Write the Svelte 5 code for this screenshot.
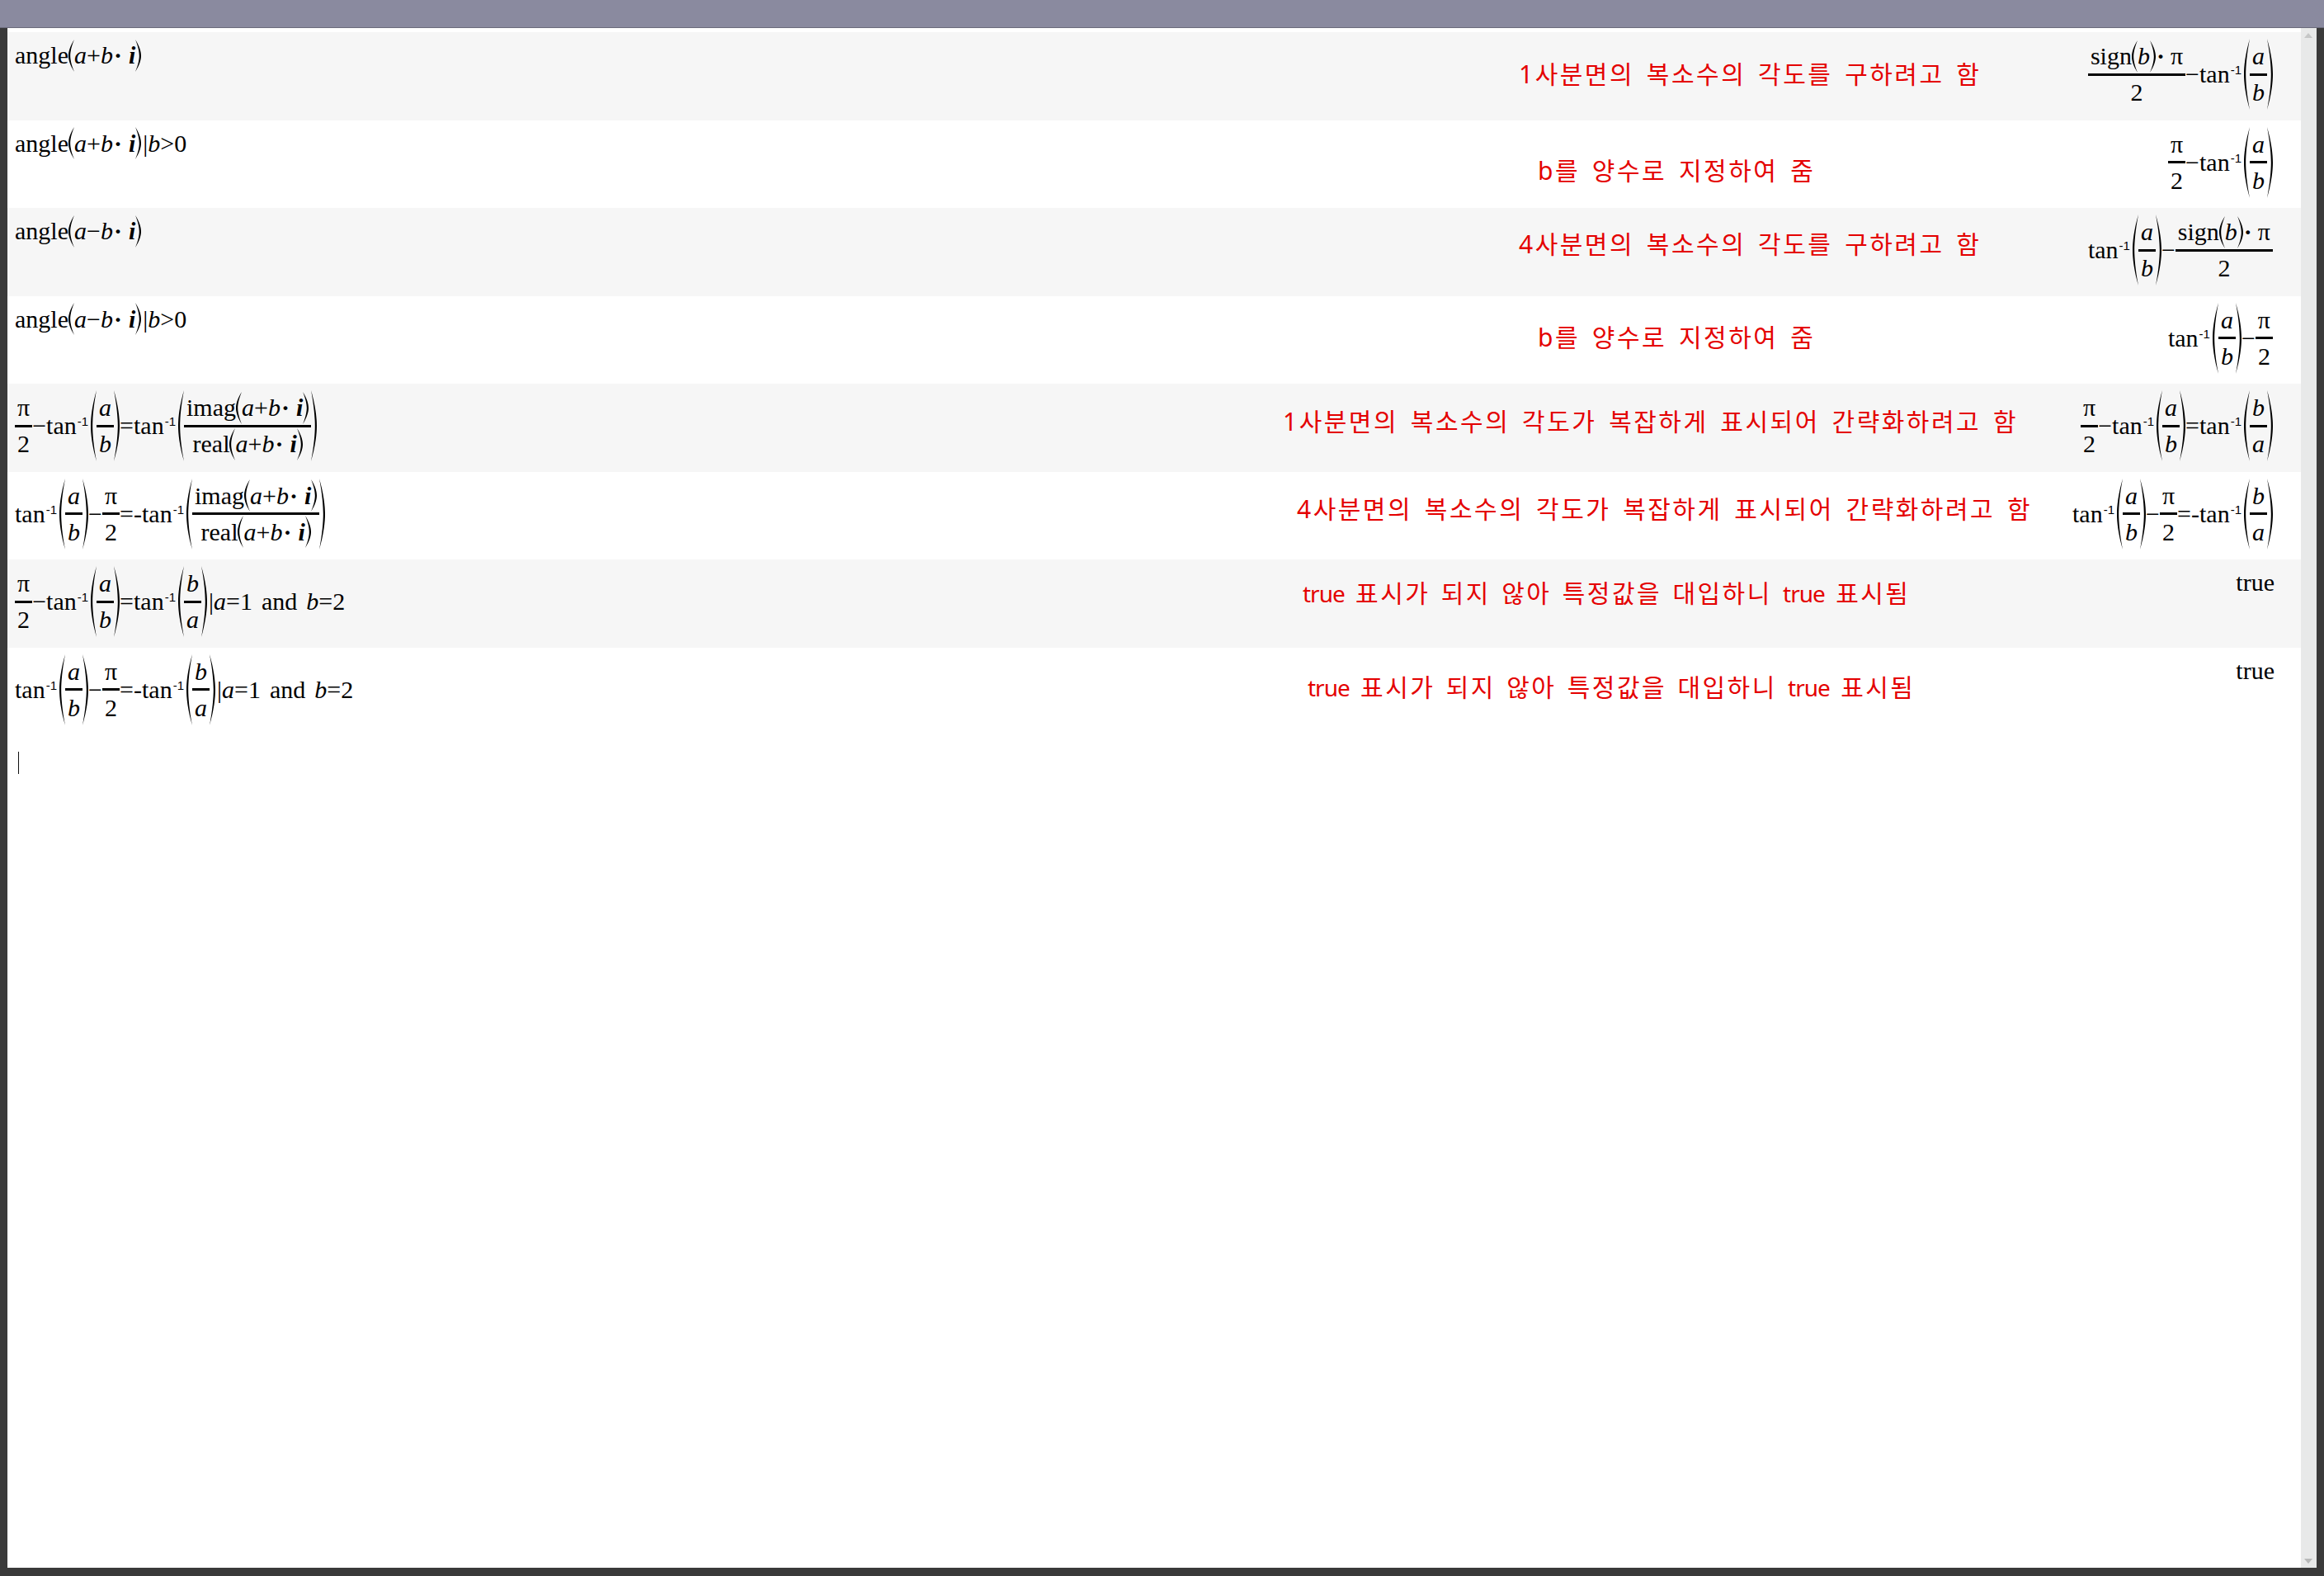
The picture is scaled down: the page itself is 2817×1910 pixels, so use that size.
<script>
  // crescent-shaped bracket, thin at the tips and thicker mid-height
  function parenPath(h) {
    const m = h / 2;
    const a = h * 0.22;
    return `M7 0C1.5 ${a} 0 ${m - a * 0.5} 0 ${m}C0 ${m + a * 0.5} 1.5 ${h - a} 7 ${h}C3.4 ${h - a} 2.2 ${m + a * 0.5} 2.2 ${m}C2.2 ${m - a * 0.5} 3.4 ${a} 7 0Z`;
  }
</script>

{#snippet paren(h, right)}
  <svg class="paren" class:right width="7" height={h} viewBox="0 0 7 {h}"><path d={parenPath(h)} /></svg>
{/snippet}

{#snippet wrap(h, body)}
  {@render paren(h, false)}{@render body()}{@render paren(h, true)}
{/snippet}

{#snippet frac(top, bottom)}
  <span class="frac">
    <span class="num">{@render top()}</span>
    <span class="bar"></span>
    <span class="den">{@render bottom()}</span>
  </span>
{/snippet}

{#snippet tx(s)}<span class="t">{s}</span>{/snippet}
{#snippet va()}<span class="t"><i>a</i></span>{/snippet}
{#snippet vb()}<span class="t"><i>b</i></span>{/snippet}
{#snippet pi()}<span class="t">π</span>{/snippet}
{#snippet two()}<span class="t">2</span>{/snippet}
{#snippet plus()}<span class="t"><i>a</i>+<i>b</i><b class="dot">·</b><b class="imag"><i>i</i></b></span>{/snippet}
{#snippet minus()}<span class="t"><i>a</i>−<i>b</i><b class="dot">·</b><b class="imag"><i>i</i></b></span>{/snippet}
{#snippet atan()}<span class="t">tan<sup>-1</sup></span>{/snippet}

{#snippet angleP()}{@render tx('angle')}{@render wrap(39, plus)}{/snippet}
{#snippet angleM()}{@render tx('angle')}{@render wrap(39, minus)}{/snippet}
{#snippet ab()}{@render frac(va, vb)}{/snippet}
{#snippet ba()}{@render frac(vb, va)}{/snippet}
{#snippet pi2()}{@render frac(pi, two)}{/snippet}
{#snippet tanAB()}{@render atan()}{@render wrap(86, ab)}{/snippet}
{#snippet tanBA()}{@render atan()}{@render wrap(86, ba)}{/snippet}
{#snippet signTop()}{@render tx('sign')}{@render wrap(39, signB)}<span class="t"><b class="dot">·</b><span class="after-dot">π</span></span>{/snippet}
{#snippet signB()}<span class="t"><i>b</i></span>{/snippet}
{#snippet signPi()}{@render frac(signTop, two)}{/snippet}
{#snippet imagTop()}{@render tx('imag')}{@render wrap(39, plus)}{/snippet}
{#snippet realBot()}{@render tx('real')}{@render wrap(39, plus)}{/snippet}
{#snippet ratio()}{@render frac(imagTop, realBot)}{/snippet}
{#snippet tanRatio()}{@render atan()}{@render wrap(86, ratio)}{/snippet}

{#snippet row(left, text, x, y, right)}
  <div class="row">
    <div class="m">{@render left()}</div>
    <div class="note" style:margin-left="{x}px" style:margin-top="{y}px">{#each text.split(/(true)/) as part}{#if part === 'true'}<span class="lat">{part}</span>{:else}{part}{/if}{/each}</div>
    <div class="m res">{@render right()}</div>
  </div>
{/snippet}

{#snippet l1()}{@render angleP()}{/snippet}
{#snippet l2()}{@render angleP()}<span class="t pos">|<i>b</i>&gt;0</span>{/snippet}
{#snippet l3()}{@render angleM()}{/snippet}
{#snippet l4()}{@render angleM()}<span class="t pos">|<i>b</i>&gt;0</span>{/snippet}
{#snippet l5()}{@render pi2()}{@render tx('−')}{@render tanAB()}{@render tx('=')}{@render tanRatio()}{/snippet}
{#snippet l6()}{@render tanAB()}{@render tx('−')}{@render pi2()}{@render tx('=-')}{@render tanRatio()}{/snippet}
{#snippet cond()}<span class="t pos">|<i>a</i>=1<span class="and">and</span><i>b</i>=2</span>{/snippet}
{#snippet l7()}{@render pi2()}{@render tx('−')}{@render tanAB()}{@render tx('=')}{@render tanBA()}{@render cond()}{/snippet}
{#snippet l8()}{@render tanAB()}{@render tx('−')}{@render pi2()}{@render tx('=-')}{@render tanBA()}{@render cond()}{/snippet}

{#snippet r1()}{@render signPi()}{@render tx('−')}{@render tanAB()}{/snippet}
{#snippet r2()}{@render pi2()}{@render tx('−')}{@render tanAB()}{/snippet}
{#snippet r3()}{@render tanAB()}{@render tx('−')}{@render signPi()}{/snippet}
{#snippet r4()}{@render tanAB()}{@render tx('−')}{@render pi2()}{/snippet}
{#snippet r5()}{@render pi2()}{@render tx('−')}{@render tanAB()}{@render tx('=')}{@render tanBA()}{/snippet}
{#snippet r6()}{@render tanAB()}{@render tx('−')}{@render pi2()}{@render tx('=-')}{@render tanBA()}{/snippet}
{#snippet rTrue()}<span class="t true">true</span>{/snippet}

<div class="window">
  <div class="title"></div>
  <div class="middle">
    <div class="doc">
      {@render row(l1, '1사분면의 복소수의 각도를 구하려고 함', 332, 27, r1)}
      {@render row(l2, 'b를 양수로 지정하여 줌', 355, 37, r2)}
      {@render row(l3, '4사분면의 복소수의 각도를 구하려고 함', 332, 20, r3)}
      {@render row(l4, 'b를 양수로 지정하여 줌', 355, 26, r4)}
      {@render row(l5, '1사분면의 복소수의 각도가 복잡하게 표시되어 간략화하려고 함', 46, 22, r5)}
      {@render row(l6, '4사분면의 복소수의 각도가 복잡하게 표시되어 간략화하려고 함', 63, 21, r6)}
      {@render row(l7, 'true 표시가 되지 않아 특정값을 대입하니 true 표시됨', 70, 17, rTrue)}
      {@render row(l8, 'true 표시가 되지 않아 특정값을 대입하니 true 표시됨', 76, 24, rTrue)}
      <div class="caret"></div>
    </div>
    <div class="scroll">
      <span class="arrow up"></span>
      <span class="arrow down"></span>
    </div>
  </div>
</div>

<style>
  :global(body) {
    margin: 0;
    background: #3a3a3a;
  }
  .window {
    display: flex;
    flex-direction: column;
    height: 1910px;
    overflow: hidden;
    font-family: "Liberation Serif", serif;
    font-size: 30px;
    color: #000;
  }
  .title {
    flex: none;
    height: 33px;
    background: #8a8a9f;
    border-bottom: 1px solid #6c6c7c;
  }
  .middle {
    display: flex;
    height: 1866px;
    padding: 0 9px;
  }
  .doc {
    flex: 1;
    min-width: 0;
    padding-top: 5px;
    background: #fff;
  }
  .row {
    display: grid;
    grid-template-columns: 1491px minmax(0, 1fr) auto;
    align-items: start;
    height: 106.5px;
    padding: 8px 34px 0 9px;
    box-sizing: border-box;
  }
  .row:nth-child(odd) {
    background: #f6f6f6;
  }
  .m {
    display: flex;
    align-items: center;
    white-space: pre;
  }
  .res {
    justify-content: flex-end;
  }
  .note {
    grid-column: 2;
    font-family: "Noto Sans", "Noto Sans CJK KR", sans-serif;
    font-size: 30px;
    line-height: 32px;
    letter-spacing: 2.5px;
    word-spacing: 4.5px;
    color: #e40000;
    white-space: pre;
  }
  .row:nth-child(n + 7) .note {
    word-spacing: 3px;
  }
  .lat {
    font-size: 28px;
    letter-spacing: -1px;
  }
  .t {
    display: block;
    line-height: 40px;
  }
  .true {
    margin-right: -2px;
  }
  .pos {
    margin-left: 2px;
  }
  .t sup {
    font-family: "Liberation Sans", sans-serif;
    font-size: 15px;
    line-height: 0;
    vertical-align: 10px;
    margin-left: 1px;
    margin-right: 3px;
  }
  .dot {
    font-weight: 700;
    margin-left: 1px;
  }
  .imag {
    font-weight: 700;
    margin-left: 8px;
  }
  .after-dot {
    margin-left: 7px;
  }
  .and {
    margin: 0 11px;
  }
  .frac {
    display: inline-flex;
    flex-direction: column;
    align-items: stretch;
  }
  .num,
  .den {
    display: flex;
    justify-content: center;
    align-items: center;
    height: 41px;
    padding: 0 3px;
  }
  .bar {
    height: 3px;
    background: #000;
  }
  .paren {
    flex: none;
    display: block;
    fill: #000;
  }
  .paren.right {
    transform: scaleX(-1);
  }
  .caret {
    width: 1px;
    height: 27px;
    margin: 20px 0 0 13px;
    background: #111;
  }
  .scroll {
    flex: none;
    width: 19px;
    position: relative;
    background: #e8e9e9;
  }
  .arrow {
    position: absolute;
    left: 4px;
    border-left: 5px solid transparent;
    border-right: 5px solid transparent;
  }
  .arrow.up {
    top: 6px;
    border-bottom: 6px solid #c6c7c7;
  }
  .arrow.down {
    bottom: 5px;
    border-top: 6px solid #b8b9b9;
  }
</style>
